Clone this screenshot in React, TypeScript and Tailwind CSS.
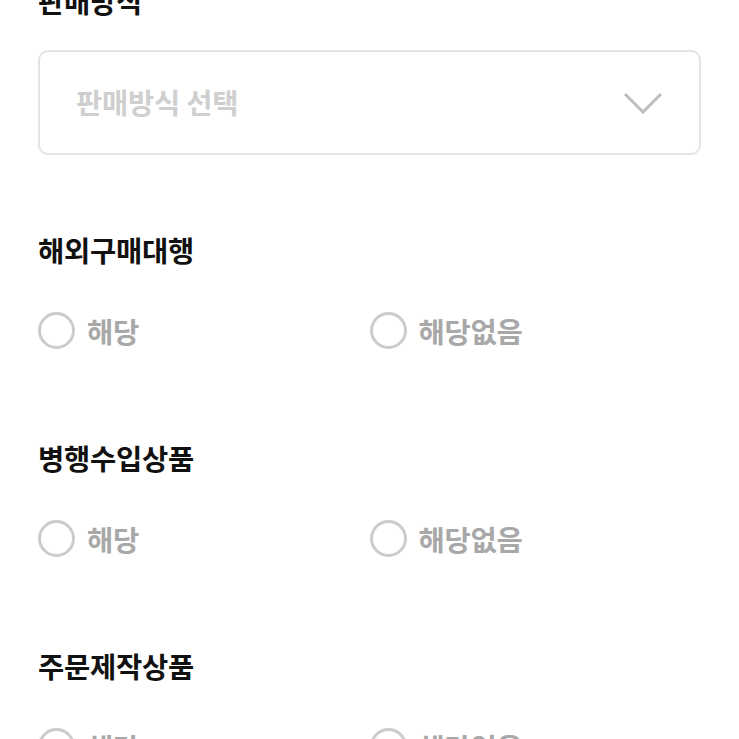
import * as React from "react";

type radioProps = {
    name: string;
};

const font = { fontFamily: '"Noto Sans CJK KR", "Noto Sans", sans-serif' };

const RadioRow: React.FC<radioProps> = ({name}) => {
    return (
        <div className="grid grid-cols-2 mt-[44px]">
            {["해당", "해당없음"].map((label) => (
                <label key={label} className="flex items-center gap-[12px] cursor-pointer">
                    <input type="radio" name={name} className="peer sr-only"/>
                    <span className="w-[37px] h-[37px] rounded-full border-[3px] border-[#cccccc] box-border"></span>
                    <span className="text-[28.5px] leading-[37px] font-bold text-[#a8a8a8] tracking-[-0.2px]">{label}</span>
                </label>
            ))}
        </div>
    );
};

const Section: React.FC<{title: string; name: string}> = ({title, name}) => (
    <div className="mt-[91px]">
        <div className="text-[28.5px] leading-[36px] font-bold text-[#111111] tracking-[-0.2px]">{title}</div>
        <RadioRow name={name}/>
    </div>
);

export default function App() {
    return (
        <div className="w-[739px] h-[739px] overflow-hidden bg-white" style={font}>
            <div className="px-[38px] -mt-[17px]">
                <div className="text-[28.5px] leading-[36px] font-bold text-[#111111] tracking-[-0.2px]">판매방식</div>
                <div className="mt-[31px] h-[105px] rounded-[10px] border-2 border-[#e4e4e4] flex items-center justify-between pl-[36px] pr-[36px]">
                    <span className="text-[28.5px] font-bold text-[#cfcfcf] tracking-[-0.2px]">판매방식 선택</span>
                    <svg width="40" height="22" viewBox="0 0 40 22" fill="none">
                        <path d="M2 2 L20 20 L38 2" stroke="#bdbdbd" strokeWidth="3"/>
                    </svg>
                </div>
                <div className="mt-[77px]">
                    <div className="text-[28.5px] leading-[36px] font-bold text-[#111111] tracking-[-0.2px]">해외구매대행</div>
                    <RadioRow name="overseas"/>
                </div>
                <Section title="병행수입상품" name="parallel"/>
                <Section title="주문제작상품" name="custom"/>
            </div>
        </div>
    );
}
